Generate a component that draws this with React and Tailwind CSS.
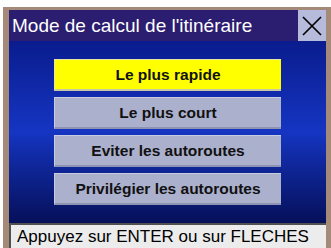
const options = [
  { label: "Le plus rapide", active: true },
  { label: "Le plus court" },
  { label: "Eviter les autoroutes" },
  { label: "Privilégier les autoroutes" },
]

export default function App() {
  return (
    <div className="w-[331px] h-[248px] bg-white pt-[7px] pl-[3px] overflow-hidden font-['Liberation_Sans',Arial,sans-serif]">
      <div className="h-[241px] bg-[#a58a7a] pl-[6px] pr-[5px] pt-[3px] flex flex-col">
        {/* title bar */}
        <div className="h-[31px] bg-[#2b1d70] flex items-center shrink-0">
          <span className="flex-1 pl-[3px] text-white text-[19px] leading-none">
            Mode de calcul de l'itinéraire
          </span>
          <div className="w-[28px] h-[31px] bg-[#b6bbdc] flex items-center justify-center">
            <svg width="22" height="22" viewBox="0 0 22 22">
              <path d="M2 2 L20 20 M20 2 L2 20" stroke="#000" strokeWidth="1.7" />
            </svg>
          </div>
        </div>

        {/* body */}
        <div className="h-[182px] bg-gradient-to-b from-[#0a1c8e] via-[#1535c2] to-[#06105a] flex flex-col items-center pt-[18px] gap-[6px] shrink-0">
          {options.map((opt) => (
            <div
              key={opt.label}
              className={
                opt.active
                  ? "w-[227px] h-[32px] bg-[#ffff00] border-t border-l border-[#e8e8a0] border-b-2 border-b-[#c8c8a8] flex items-center justify-center"
                  : "w-[227px] h-[32px] bg-[#abb0cd] border-t border-l border-[#c8cce0] border-b-2 border-b-[#8e93b4] flex items-center justify-center"
              }
            >
              <span className="text-[15.5px] font-bold text-[#111]">{opt.label}</span>
            </div>
          ))}
        </div>

        {/* status bar */}
        <div className="flex-1 bg-[#ececec] border-t-2 border-l-2 border-[#505050] flex items-center pl-[6px]">
          <span className="text-[17px] text-black leading-none">Appuyez sur ENTER ou sur FLECHES</span>
        </div>
      </div>
    </div>
  )
}
